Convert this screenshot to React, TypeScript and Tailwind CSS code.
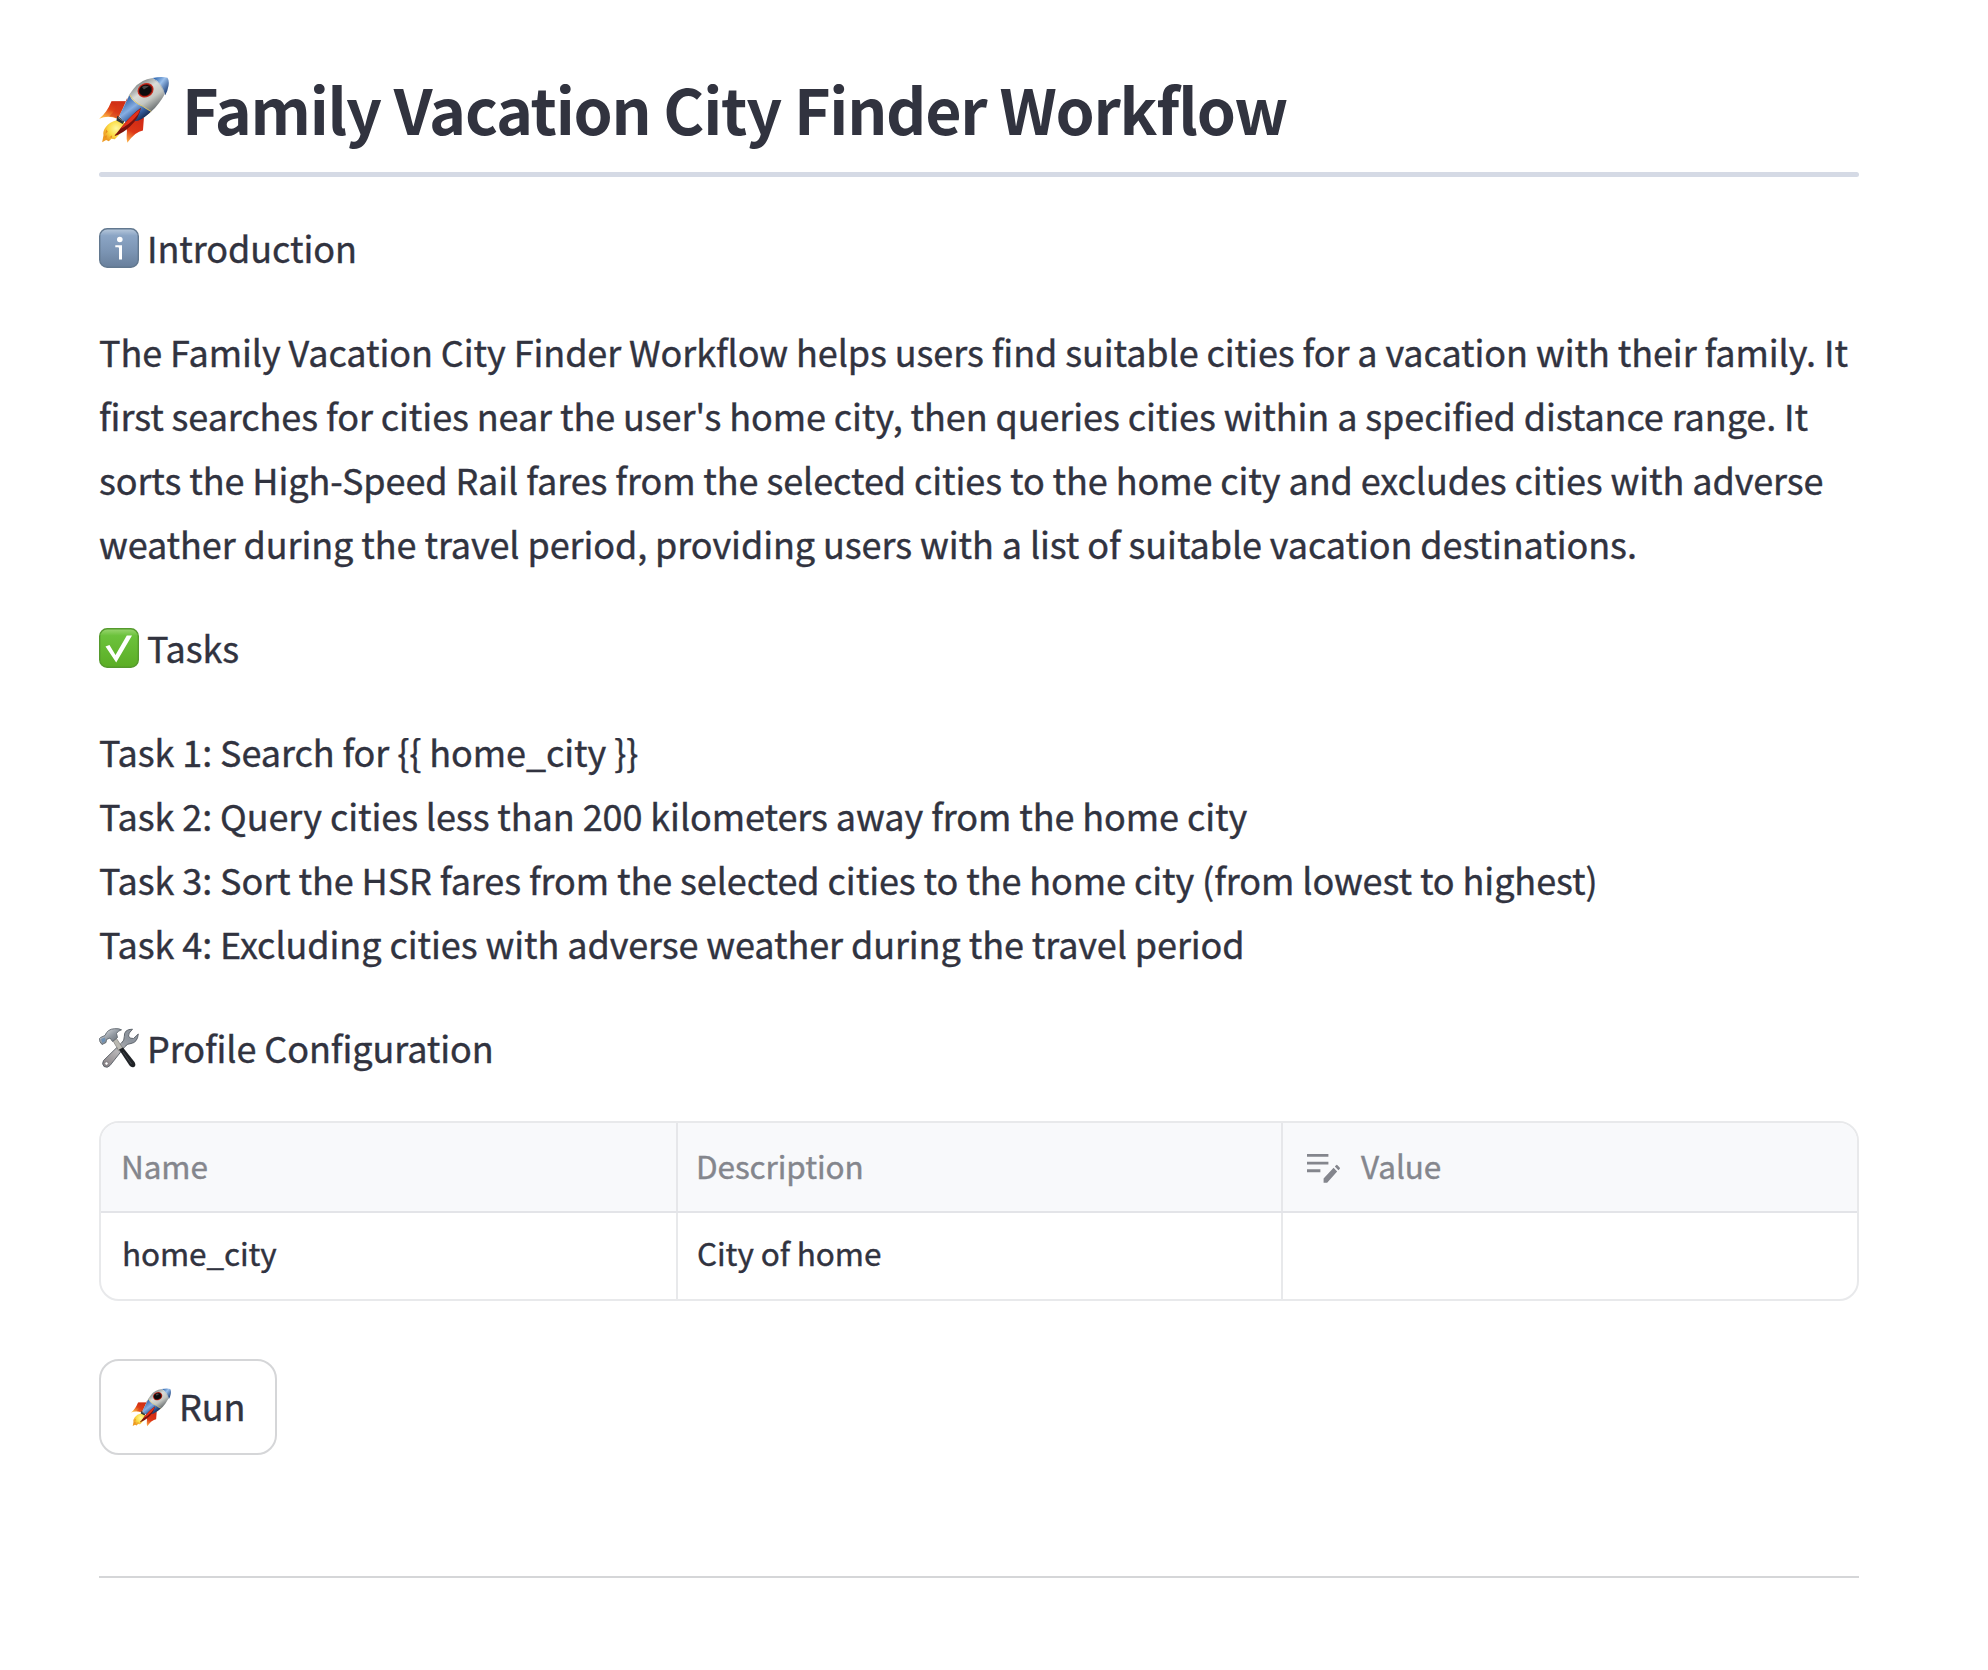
import React from "react";

function Rocket({ className }: { className: string }) {
  return (
    <svg viewBox="57 50 210 199" className={className} aria-label="rocket">
      <defs>
        <linearGradient id="rkBody" x1="160" y1="80" x2="215" y2="160" gradientUnits="userSpaceOnUse">
          <stop offset="0" stopColor="#8c9191" />
          <stop offset=".3" stopColor="#dadcd8" />
          <stop offset=".6" stopColor="#c3c6c2" />
          <stop offset="1" stopColor="#5d6265" />
        </linearGradient>
        <linearGradient id="rkBlue" x1="130" y1="125" x2="175" y2="185" gradientUnits="userSpaceOnUse">
          <stop offset="0" stopColor="#3d6db0" />
          <stop offset=".4" stopColor="#86aee2" />
          <stop offset=".75" stopColor="#345d9e" />
          <stop offset="1" stopColor="#182e58" />
        </linearGradient>
        <linearGradient id="rkNose" x1="225" y1="55" x2="268" y2="90" gradientUnits="userSpaceOnUse">
          <stop offset="0" stopColor="#386fb5" />
          <stop offset=".4" stopColor="#9bc0ec" />
          <stop offset="1" stopColor="#1d3f78" />
        </linearGradient>
        <linearGradient id="rkFinA" x1="110" y1="120" x2="85" y2="180" gradientUnits="userSpaceOnUse">
          <stop offset="0" stopColor="#c92412" />
          <stop offset=".5" stopColor="#e04116" />
          <stop offset="1" stopColor="#ffc24a" />
        </linearGradient>
        <linearGradient id="rkFinB" x1="185" y1="170" x2="145" y2="248" gradientUnits="userSpaceOnUse">
          <stop offset="0" stopColor="#cf2714" />
          <stop offset=".6" stopColor="#dd3717" />
          <stop offset="1" stopColor="#ffb54a" />
        </linearGradient>
        <radialGradient id="rkFire" cx="108" cy="205" r="42" gradientUnits="userSpaceOnUse">
          <stop offset="0" stopColor="#fff9a0" />
          <stop offset=".55" stopColor="#fbdc45" />
          <stop offset="1" stopColor="#ee9a22" />
        </radialGradient>
      </defs>
      <path d="M94 123 L147 122 L141 114 L120 166 L112 176 Q84 164 57 176 Q80 158 94 123Z" fill="url(#rkFinA)" />
      <path d="M94 123 L145 123 L121 163 L112 175 Q100 168 88 168 Q108 150 110 132Z" fill="#d5361a" opacity=".55" />
      <path d="M192 172 L189 211 Q166 214 142 248 Q139 239 140 226 Q142 212 139 204 L165 178Z" fill="url(#rkFinB)" />
      <path d="M112 180 Q87 186 77 201 Q67 214 70 226 L66 247 L78 240 L86 244 L94 236 L104 238 L113 229 Q128 215 138 198 L131 186Z" fill="url(#rkFire)" />
      <path d="M78 208l5 7-7 6zM72 230l9-4-3 9zM88 232l8-6-1 8zM104 222l8-2-6 8z" fill="#e98e1d" />
      <path d="M112 167 L133 182 L128 192 L109 181Z" fill="#2d3439" />
      <path d="M114 172 L129 183" stroke="#7e8a90" strokeWidth="3" />
      <path d="M218 53 Q183 57 160 86 Q146 102 140 121 L118 166 Q124 179 139 186 L176 179 Q214 162 238 128 Q255 106 258 91Z" fill="url(#rkBody)" />
      <path d="M148 106 Q158 128 190 140 Q206 153 213 154 Q195 173 176 181 L139 187 Q123 179 118 166Z" fill="url(#rkBlue)" />
      <path d="M150 104 Q160 126 188 138 Q203 148 214 154" stroke="#e0c75c" strokeWidth="2.5" fill="none" />
      <path d="M218 53 Q246 48 263 52 Q269 61 266 77 Q263 94 256 105 Q246 67 218 53Z" fill="url(#rkNose)" />
      <path d="M222 57 Q246 70 254 102" stroke="#a9b2b9" strokeWidth="3" fill="none" />
      <path d="M183 143 Q156 163 130 194 L103 228 Q128 220 150 199 Q176 177 183 143Z" fill="#7a120d" />
      <path d="M182 146 Q154 164 120 207 Q149 192 164 174 Q178 161 182 146Z" fill="#e2311b" />
      <ellipse cx="197" cy="90" rx="25" ry="21" transform="rotate(-25 197 90)" fill="#c92a1d" />
      <ellipse cx="197" cy="90" rx="21.500" ry="17.500" transform="rotate(-25 197 90)" fill="#5b0f0c" />
      <ellipse cx="196" cy="90" rx="18.500" ry="15.500" transform="rotate(-25 196 90)" fill="#0c0b0d" />
      <path d="M186 80 Q196 73 207 79 Q198 83 192 88Z" fill="#4a4747" />
    </svg>
  );
}

function InfoBadge() {
  return (
    <svg viewBox="0 0 40 40" className="mt-[2px] size-10 shrink-0" aria-label="info">
      <defs>
        <linearGradient id="inf" x1="0" y1="0" x2="0" y2="1">
          <stop offset="0" stopColor="#b9cadd" />
          <stop offset=".18" stopColor="#8ba5c5" />
          <stop offset=".6" stopColor="#7b94b3" />
          <stop offset="1" stopColor="#687f9b" />
        </linearGradient>
      </defs>
      <rect x=".7" y=".7" width="38.600" height="38.600" rx="7.500" fill="url(#inf)" stroke="#62788f" strokeWidth="1.400" />
      <circle cx="20.800" cy="11.500" r="2.800" fill="#fff" />
      <path d="M16.300 17.300h6.700v14.200h-3v-11.300q0-1-1-1h-2.700z" fill="#fff" />
    </svg>
  );
}

function CheckBadge() {
  return (
    <svg viewBox="0 0 40 40" className="mt-[2px] size-10 shrink-0" aria-label="done">
      <defs>
        <linearGradient id="chk" x1="0" y1="0" x2="0" y2="1">
          <stop offset="0" stopColor="#9bd672" />
          <stop offset=".18" stopColor="#6cc23c" />
          <stop offset="1" stopColor="#5bad25" />
        </linearGradient>
      </defs>
      <rect x=".7" y=".7" width="38.600" height="38.600" rx="7.500" fill="url(#chk)" stroke="#559a2d" strokeWidth="1.400" />
      <path d="M6.500 18.500 L10.500 17 L16.500 27 L27.800 7.500 L33 7.500 L17.200 34.500Z" fill="#fff" />
    </svg>
  );
}

function Tools() {
  return (
    <svg viewBox="0 0 40 40" className="mt-[2px] size-10 shrink-0" aria-label="tools">
      <defs>
        <linearGradient id="stl" x1="0" y1="0" x2="1" y2="1">
          <stop offset="0" stopColor="#eceff2" />
          <stop offset=".5" stopColor="#9299a1" />
          <stop offset="1" stopColor="#575d64" />
        </linearGradient>
        <linearGradient id="wr" x1="28" y1="10" x2="8" y2="38" gradientUnits="userSpaceOnUse">
          <stop offset="0" stopColor="#8d949d" />
          <stop offset=".5" stopColor="#b5b3b5" />
          <stop offset="1" stopColor="#8b8588" />
        </linearGradient>
      </defs>
      <path d="M33.500 1.200 Q25 1 25.300 8.500 Q25.500 12.500 22.500 15 L4.500 32.500 Q2.500 36 5 38.500 Q8.500 40.500 11 37.500 L26 18.500 Q28.500 15.500 32 15.500 Q38.500 14.500 39.300 6 L34.500 10.500 Q30.500 11 29.500 8 Q29 5.500 33.500 1.200Z" fill="url(#wr)" stroke="#555b63" strokeWidth=".9" />
      <circle cx="7.500" cy="35.500" r="1.700" fill="#fff" stroke="#716b70" strokeWidth=".7" />
      <path d="M14 13 L17.500 10.500 L24 20.500 L20 23Z" fill="#b9b8b1" stroke="#706f6b" strokeWidth=".6" />
      <path d="M20 21.500 L24 19.500 L35.500 34 Q37.500 37.500 35 39 Q32.500 40 30.500 37.500Z" fill="#202327" />
      <path d="M24 24 L32.500 36" stroke="#4a4f55" strokeWidth=".8" />
      <path d="M1.500 9.500 L6 7.500 Q8.500 1 15.500 .7 Q20 .3 22.500 1.800 Q18.500 3 17.500 5.500 L18.500 9.500 L13.500 13.500 L11 10 L7.500 11.500 L7 14.500 L3 16.500 Q0 13.500 .5 10.500Z" fill="url(#stl)" stroke="#5e656d" strokeWidth=".9" />
      <path d="M2 11 L6 9.500 L6.500 13 L3.500 15Z" fill="#6e91b5" />
    </svg>
  );
}

function EditNote() {
  return (
    <svg viewBox="3 6 18.500 15.500" className="mt-[5px] h-[29px] w-[33px] shrink-0" preserveAspectRatio="none" fill="#84868d" aria-label="editable">
      <path d="M3 6h12v1.500H3zM3 10.100h12v1.500H3zM3 14.200h7.500v1.500H3z" />
      <path d="M12.300 21.300v-2.200l5.600-5.700 2 2-5.600 5.900zM18.600 12.700l.7-.7q.4-.4.8 0l1.200 1.200q.4.400 0 .8l-.7.700z" />
    </svg>
  );
}

function Section({ icon, children }: { icon: React.ReactNode; children: React.ReactNode }) {
  return (
    <h2 className="flex h-16 items-center gap-2 leading-[64px]">
      {icon}
      <span>{children}</span>
    </h2>
  );
}

const intro = [
  "The Family Vacation City Finder Workflow helps users find suitable cities for a vacation with their family. It",
  "first searches for cities near the user's home city, then queries cities within a specified distance range. It",
  "sorts the High-Speed Rail fares from the selected cities to the home city and excludes cities with adverse",
  "weather during the travel period, providing users with a list of suitable vacation destinations.",
];

const tasks = [
  "Task 1: Search for {{ home_city }}",
  "Task 2: Query cities less than 200 kilometers away from the home city",
  "Task 3: Sort the HSR fares from the selected cities to the home city (from lowest to highest)",
  "Task 4: Excluding cities with adverse weather during the travel period",
];

function Lines({ items }: { items: string[] }) {
  return (
    <div className="my-10 leading-[64px] whitespace-nowrap">
      {items.map((t) => (
        <p key={t}>{t}</p>
      ))}
    </div>
  );
}

export default function App() {
  return (
    <main className="min-h-[1670px] w-[1988px] overflow-hidden bg-white pl-[99px] font-['Noto_Sans_CJK_SC',sans-serif] text-[36px] tracking-[-0.086px] text-[#31333f] [-webkit-text-stroke:0.4px]">
      <div className="w-[1760px]">
        <h1 className="flex h-[172px] items-start gap-[13px] pt-[66px] text-[62.700px] leading-[84px] font-bold tracking-[-1.250px] whitespace-nowrap [-webkit-text-stroke:0px]">
          <Rocket className="mt-[11px] h-[66px] w-[70px] shrink-0" />
          <span>Family Vacation City Finder Workflow</span>
        </h1>
        <div className="h-[5px] rounded-full bg-[#d5dae5]" />
        <div className="h-[38px]" />
        <Section icon={<InfoBadge />}>Introduction</Section>
        <Lines items={intro} />
        <Section icon={<CheckBadge />}>Tasks</Section>
        <Lines items={tasks} />
        <Section icon={<Tools />}>Profile Configuration</Section>
        <div className="mt-[42px] h-[180px] overflow-hidden rounded-[20px] border-2 border-[#e8e9eb] text-[31.500px]">
          <div className="grid h-[90px] grid-cols-[577px_605px_1fr] border-b-2 border-[#e3e4e8] bg-[#f8f9fb] text-[#84868d]">
            <div className="flex items-center border-r-2 border-[#e6e7ea] pb-[2px] pl-[20px]">Name</div>
            <div className="flex items-center border-r-2 border-[#e6e7ea] pb-[2px] pl-[18px]">Description</div>
            <div className="flex items-center gap-[21px] pb-[2px] pl-[24px]">
              <EditNote />
              <span>Value</span>
            </div>
          </div>
          <div className="grid h-[86px] grid-cols-[577px_605px_1fr]">
            <div className="flex items-center border-r-2 border-[#e8e9eb] pb-[7px] pl-[21px]">home_city</div>
            <div className="flex items-center border-r-2 border-[#e8e9eb] pb-[7px] pl-[19px]">City of home</div>
            <div />
          </div>
        </div>
        <button className="mt-[58px] flex h-[96px] w-[178px] items-center gap-2 rounded-[20px] border-2 border-[#d5d6d8] pl-[30px]">
          <Rocket className="h-[39px] w-[40px] shrink-0" />
          <span className="pb-1">Run</span>
        </button>
        <hr className="mt-[121px] border-t-2 border-[#d5d6d8]" />
      </div>
    </main>
  );
}
